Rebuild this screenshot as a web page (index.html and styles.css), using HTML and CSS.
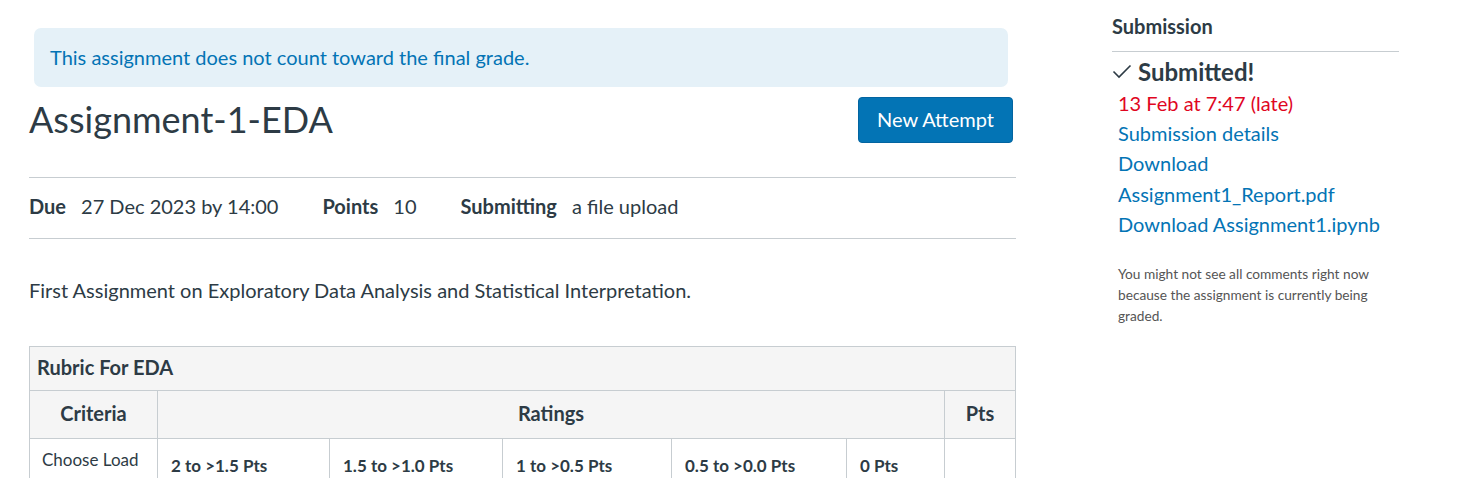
FILE: index.html
```html
<!DOCTYPE html>
<html>
<head>
<meta charset="utf-8">
<link rel="stylesheet" href="styles.css">
</head>
<body>
<div class="page">
  <main class="main">
    <div class="alert">This assignment does not count toward the final grade.</div>
    <div class="title-row">
      <h1 class="title">Assignment-1-EDA</h1>
      <button class="btn">New Attempt</button>
    </div>
    <div class="details">
      <span class="label">Due</span><span class="value">27 Dec 2023 by 14:00</span>
      <span class="label">Points</span><span class="value">10</span>
      <span class="label">Submitting</span><span class="value">a file upload</span>
    </div>
    <p class="desc">First Assignment on Exploratory Data Analysis and Statistical Interpretation.</p>
    <table class="rubric">
      <caption class="cap">Rubric For EDA</caption>
      <thead>
        <tr>
          <th class="h-crit">Criteria</th>
          <th class="h-rat">Ratings</th>
          <th class="h-pts">Pts</th>
        </tr>
      </thead>
      <tbody>
        <tr>
          <td class="crit">Choose Load</td>
          <td class="ratings">
            <div class="rating-row">
              <div class="rating r1">2 to &gt;1.5 Pts</div>
              <div class="rating r2">1.5 to &gt;1.0 Pts</div>
              <div class="rating r3">1 to &gt;0.5 Pts</div>
              <div class="rating r4">0.5 to &gt;0.0 Pts</div>
              <div class="rating r5">0 Pts</div>
            </div>
          </td>
          <td class="pts"></td>
        </tr>
      </tbody>
    </table>
  </main>
  <aside class="side">
    <h2 class="side-title">Submission</h2>
    <div class="submitted">
      <svg class="check" width="20" height="16" viewBox="0 0 20 16"><path d="M1.5 8.5 L7 14 L18.5 2.5" fill="none" stroke="#2d3b45" stroke-width="1.6"/></svg>
      <span>Submitted!</span>
    </div>
    <div class="sub-list">
      <div class="late">13 Feb at 7:47 (late)</div>
      <a class="link">Submission details</a>
      <a class="link">Download</a>
      <a class="link">Assignment1_Report.pdf</a>
      <a class="link">Download Assignment1.ipynb</a>
    </div>
    <p class="note">You might not see all comments right now because the assignment is currently being graded.</p>
  </aside>
</div>
</body>
</html>
```

FILE: styles.css
```css
* { box-sizing: border-box; }
html, body { margin: 0; padding: 0; background: #fff; }
body {
  font-family: Lato, "Liberation Sans", sans-serif;
  color: #2d3b45;
  font-size: 20px;
}
.page {
  display: flex;
  align-items: flex-start;
  padding-left: 29px;
}
.main {
  width: 987px;
  padding-top: 28px;
}
.alert {
  margin: 0 8px 0 5px;
  height: 59px;
  background: #e5f1f8;
  border-radius: 7px;
  color: #0374b5;
  display: flex;
  align-items: center;
  padding-left: 16px;
  padding-bottom: 1px;
  font-size: 20px;
}
.title-row {
  display: flex;
  justify-content: space-between;
  align-items: flex-start;
  margin-top: 10px;
  height: 80px;
}
.title {
  margin: 0;
  font-weight: 400;
  font-size: 36px;
  line-height: 42px;
  margin-top: 1px;
}
.btn {
  margin-right: 3px;
  height: 46px;
  width: 155px;
  background: #0374b5;
  color: #fff;
  border: 1px solid #0264a0;
  border-radius: 4px;
  font-family: inherit;
  font-size: 20px;
  padding: 0 0 2px;
}
.details {
  border-top: 1px solid #c7cdd1;
  border-bottom: 1px solid #c7cdd1;
  height: 62px;
  display: flex;
  align-items: center;
  padding-bottom: 4px;
}
.label { font-weight: 700; margin-right: 15px; }
.value { margin-right: 44px; }
.desc {
  margin: 37px 0 0;
  line-height: 28px;
}
.rubric {
  margin-top: 42px;
  width: 987px;
  border-collapse: collapse;
  border: 1px solid #c7cdd1;
}
.cap {
  caption-side: top;
  text-align: left;
  background: #f5f5f5;
  border: 1px solid #c7cdd1;
  border-bottom: none;
  font-weight: 700;
  font-size: 20px;
  height: 44px;
  padding: 8px 7px;
}
.rubric th {
  background: #f5f5f5;
  border: 1px solid #c7cdd1;
  font-weight: 700;
  font-size: 20px;
  height: 48px;
  padding: 0 0 3px;
}
.h-crit { width: 128px; }
.h-pts { width: 71px; }
.rubric td {
  border: 1px solid #c7cdd1;
  vertical-align: top;
  padding: 0;
  height: 60px;
}
.crit {
  font-size: 17px;
  padding: 10px 12px 0 !important;
}
.rating-row { display: flex; height: 60px; }
.rating {
  font-size: 17px;
  font-weight: 700;
  padding: 16px 13px 0;
  border-left: 1px solid #c7cdd1;
}
.r1 { border-left: none; width: 171px; }
.r2 { width: 173px; }
.r3 { width: 169px; }
.r4 { width: 175px; }
.r5 { flex: 1; }
.side {
  margin-left: 96px;
  width: 287px;
  padding-top: 13px;
}
.side-title {
  margin: 0;
  font-size: 20px;
  font-weight: 700;
  line-height: 26px;
  padding-bottom: 12px;
  border-bottom: 1px solid #c7cdd1;
}
.submitted {
  display: flex;
  align-items: center;
  font-size: 24px;
  font-weight: 700;
  margin-top: 5px;
  height: 28px;
}
.check { margin-right: 6px; }
.sub-list {
  padding-left: 6px;
  display: flex;
  flex-direction: column;
  margin-top: 3px;
}
.late { color: #e0061f; line-height: 30px; }
.link { color: #0374b5; line-height: 30.3px; text-decoration: none; }
.note {
  padding-left: 6px;
  margin: 24px 0 0;
  font-size: 13.7px;
  line-height: 21px;
  color: #555;
}
```
